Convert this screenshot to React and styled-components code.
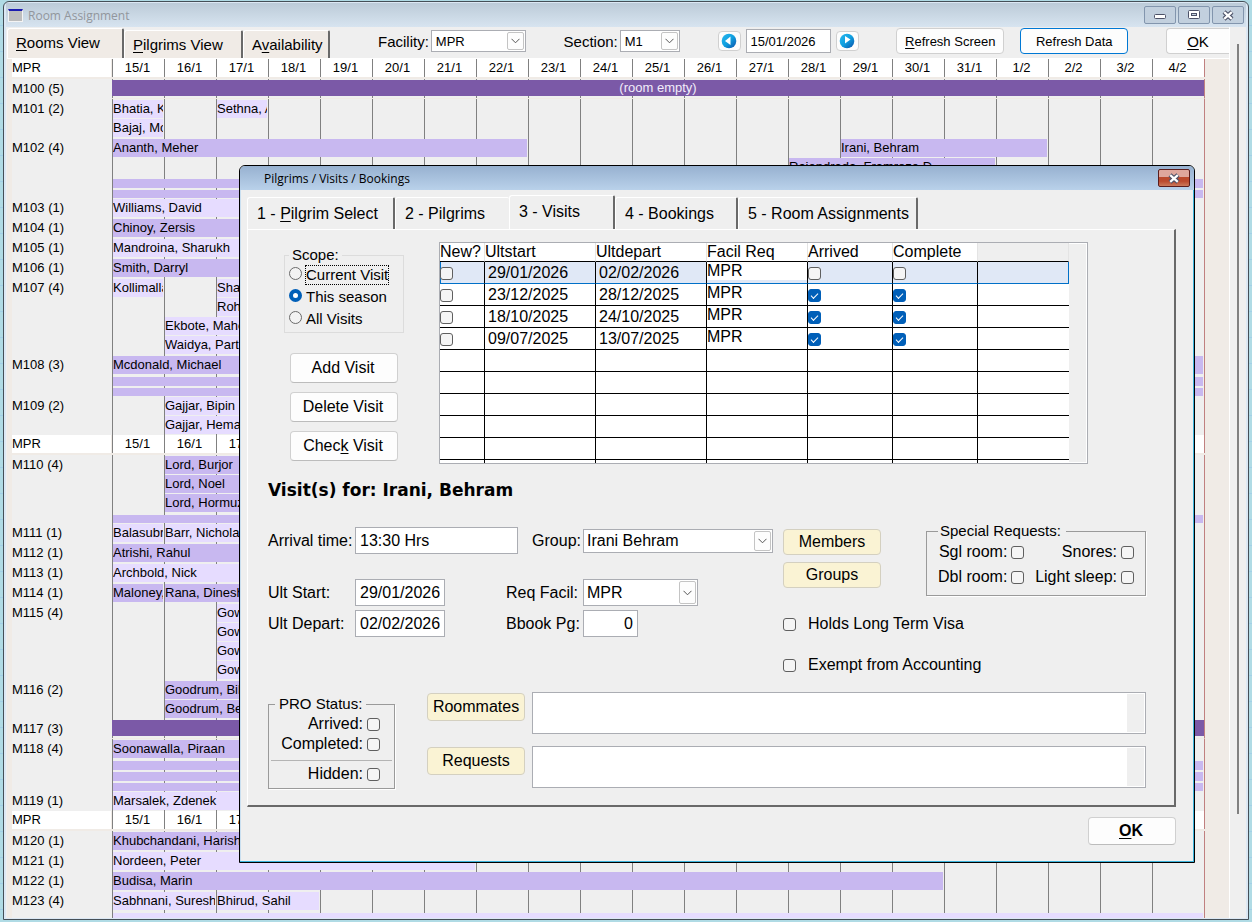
import React, { useState } from "react";
import styled, { createGlobalStyle, css } from "styled-components";

const DAYS = [
    "15/1", "16/1", "17/1", "18/1", "19/1", "20/1", "21/1", "22/1", "23/1", "24/1", "25/1",
    "26/1", "27/1", "28/1", "29/1", "30/1", "31/1", "1/2", "2/2", "3/2", "4/2",
];

// lanes: [first day, number of days, guest name], thin: number of free beds
const ROOMS = [
    { header: true },
    { name: "M100 (5)", empty: true },
    { name: "M101 (2)", lanes: [[[1, 1, "Bhatia, Karl"], [3, 1, "Sethna, Arni"]], [[1, 1, "Bajaj, Mohan"]]] },
    { name: "M102 (4)", dark: true, lanes: [[[1, 8, "Ananth, Meher"], [15, 4, "Irani, Behram"]], [[14, 4, "Rajendrada, Framroze D"]]], thin: 2 },
    { name: "M103 (1)", lanes: [[[1, 8, "Williams, David"]]] },
    { name: "M104 (1)", dark: true, lanes: [[[1, 8, "Chinoy, Zersis"]]] },
    { name: "M105 (1)", lanes: [[[1, 8, "Mandroina, Sharukh"]]] },
    { name: "M106 (1)", dark: true, lanes: [[[1, 8, "Smith, Darryl"]]] },
    { name: "M107 (4)", lanes: [[[1, 1, "Kollimalla"], [3, 6, "Sharma"]], [[3, 6, "Rohan"]], [[2, 6, "Ekbote, Mahesh"]], [[2, 6, "Waidya, Partha"]]] },
    { name: "M108 (3)", dark: true, lanes: [[[1, 21, "Mcdonald, Michael"]]], thin: 2 },
    { name: "M109 (2)", lanes: [[[2, 6, "Gajjar, Bipin"]], [[2, 6, "Gajjar, Hema"]]] },
    { header: true },
    { name: "M110 (4)", dark: true, lanes: [[[2, 6, "Lord, Burjor"]], [[2, 6, "Lord, Noel"]], [[2, 6, "Lord, Hormuz"]]], thin: 1 },
    { name: "M111 (1)", lanes: [[[1, 1, "Balasubram"], [2, 6, "Barr, Nicholas"]]] },
    { name: "M112 (1)", dark: true, lanes: [[[1, 8, "Atrishi, Rahul"]]] },
    { name: "M113 (1)", lanes: [[[1, 8, "Archbold, Nick"]]] },
    { name: "M114 (1)", dark: true, lanes: [[[1, 1, "Maloney, T"], [2, 6, "Rana, Dinesh"]]] },
    { name: "M115 (4)", lanes: [[[3, 6, "Gowda"]], [[3, 6, "Gowda"]], [[3, 6, "Gowda"]], [[3, 6, "Gowda"]]] },
    { name: "M116 (2)", dark: true, lanes: [[[2, 6, "Goodrum, Bill"]], [[2, 6, "Goodrum, Beth"]]] },
    { name: "M117 (3)", empty: true },
    { name: "M118 (4)", dark: true, lanes: [[[1, 8, "Soonawalla, Piraan"]]], thin: 3 },
    { name: "M119 (1)", lanes: [[[1, 8, "Marsalek, Zdenek"]]] },
    { header: true },
    { name: "M120 (1)", dark: true, lanes: [[[1, 7, "Khubchandani, Harish"]]] },
    { name: "M121 (1)", lanes: [[[1, 7, "Nordeen, Peter"]]] },
    { name: "M122 (1)", dark: true, lanes: [[[1, 16, "Budisa, Marin"]]] },
    { name: "M123 (4)", lanes: [[[1, 2, "Sabhnani, Suresh"], [3, 2, "Bhirud, Sahil"]]], thin: 1 },
];

const VISITS = [
    { start: "29/01/2026", depart: "02/02/2026", done: false },
    { start: "23/12/2025", depart: "28/12/2025", done: true },
    { start: "18/10/2025", depart: "24/10/2025", done: true },
    { start: "09/07/2025", depart: "13/07/2025", done: true },
];

const SelectBox = ({ id, options, small }) => (
    <SelectWrap>
        <Select id={id} $small={small}>
            {options.map((o) => (
                <option key={o}>{o}</option>
            ))}
        </Select>
        <SelectArrow>
            <svg width="9" height="6" viewBox="0 0 9 6" fill="none" stroke="#555">
                <path d="M0.5 0.8 L4.5 4.8 L8.5 0.8" />
            </svg>
        </SelectArrow>
    </SelectWrap>
);

const Globe = ({ next }) => (
    <svg width="16" height="16" viewBox="0 0 16 16">
        <defs>
            <linearGradient id={next ? "globeNext" : "globePrev"} x1="0" y1="0" x2="1" y2="1">
                <stop offset="0" stopColor="#27b7ee" />
                <stop offset="0.5" stopColor="#10a0e0" />
                <stop offset="1" stopColor="#0a4fa8" />
            </linearGradient>
        </defs>
        <circle cx="8" cy="8" r="7.3" fill={next ? "url(#globeNext)" : "url(#globePrev)"} />
        {next ? <path d="M6 3 L11.5 6.5 L6 10.5 Z" fill="#fff" /> : <path d="M9.5 3.5 L9.5 12 L4 8 Z" fill="#fff" />}
    </svg>
);

const CrossIcon = () => (
    <svg width="14" height="11" viewBox="0 0 14 11">
        <path d="M3 2 L11 9 M11 2 L3 9" stroke="#4d5268" strokeWidth="4.4" />
        <path d="M3.2 2.2 L10.8 8.8 M10.8 2.2 L3.2 8.8" stroke="#fff" strokeWidth="2.2" />
    </svg>
);

const ScheduleRow = ({ room }) => {
    if (room.header) {
        return (
            <HeaderRow>
                <HeaderLabel>MPR</HeaderLabel>
                <HeaderDays>
                    {DAYS.map((d) => (
                        <Day key={d}>{d}</Day>
                    ))}
                </HeaderDays>
            </HeaderRow>
        );
    }
    return (
        <Row>
            <RoomLabel>{room.name}</RoomLabel>
            <RoomBody $empty={room.empty}>
                {room.empty && <EmptyBar>(room empty)</EmptyBar>}
                {(room.lanes || []).map((lane, i) => (
                    <Lane key={i}>
                        {lane.map(([start, span, guest]) => (
                            <Booking key={guest} $start={start} $span={span} $dark={room.dark}>
                                {guest}
                            </Booking>
                        ))}
                    </Lane>
                ))}
                {Array.from({ length: room.thin || 0 }, (_, i) => (
                    <ThinLane key={i}>
                        <ThinBar $dark={room.dark} />
                    </ThinLane>
                ))}
            </RoomBody>
        </Row>
    );
};

const VisitsTable = () => (
    <TableFrame>
        <Table>
            <colgroup>
                <Col $width={45} />
                <Col $width={111} />
                <Col $width={111} />
                <Col $width={101} />
                <Col $width={85} />
                <Col $width={85} />
                <col />
            </colgroup>
            <thead>
                <tr>
                    <Th>New?</Th>
                    <Th>Ultstart</Th>
                    <Th>Ultdepart</Th>
                    <Th>Facil Req</Th>
                    <Th>Arrived</Th>
                    <Th>Complete</Th>
                    <Th $blank />
                </tr>
            </thead>
            <tbody>
                {VISITS.map((v, i) => (
                    <VisitRow key={v.start} $selected={i === 0}>
                        <Td $check><Check type="checkbox" aria-label="New" /></Td>
                        <Td $date>{v.start}</Td>
                        <Td $date>{v.depart}</Td>
                        <Td $facility>MPR</Td>
                        <Td $check><Check type="checkbox" aria-label="Arrived" defaultChecked={v.done} /></Td>
                        <Td $check><Check type="checkbox" aria-label="Complete" defaultChecked={v.done} /></Td>
                        <Td />
                    </VisitRow>
                ))}
                {[0, 1, 2, 3, 4, 5].map((i) => (
                    <VisitRow key={i}>
                        <Td /><Td /><Td /><Td /><Td /><Td /><Td />
                    </VisitRow>
                ))}
            </tbody>
        </Table>
        <ScrollStrip />
    </TableFrame>
);

const VisitDialog = () => {
    const [scope, setScope] = useState("season");

    return (
        <Dialog role="dialog" aria-label="Pilgrims / Visits / Bookings">
            <DialogTitle>
                <span>Pilgrims / Visits / Bookings</span>
                <CloseButton aria-label="Close"><CrossIcon /></CloseButton>
            </DialogTitle>
            <DialogBody>
                <DialogTabs>
                    <DialogTab $width={148}>1 - <u>P</u>ilgrim Select</DialogTab>
                    <DialogTab $width={114} $noEdge>2 - Pilgrims</DialogTab>
                    <DialogTab $width={106} $active>3 - Visits</DialogTab>
                    <DialogTab $width={123}>4 - Bookings</DialogTab>
                    <DialogTab $width={180}>5 - Room Assignments</DialogTab>
                </DialogTabs>
                <Panel>
                    <VisitArea>
                        <Side>
                            <ScopeBox>
                                <legend>Scope:</legend>
                                <RadioLabel $focus>
                                    <Radio type="radio" name="scope" checked={scope === "current"} onChange={() => setScope("current")} />
                                    <span>Current Visit</span>
                                </RadioLabel>
                                <RadioLabel>
                                    <Radio type="radio" name="scope" checked={scope === "season"} onChange={() => setScope("season")} />
                                    <span>This season</span>
                                </RadioLabel>
                                <RadioLabel>
                                    <Radio type="radio" name="scope" checked={scope === "all"} onChange={() => setScope("all")} />
                                    <span>All Visits</span>
                                </RadioLabel>
                            </ScopeBox>
                            <SideButtons>
                                <SideButton>Add Visit</SideButton>
                                <SideButton>Delete Visit</SideButton>
                                <SideButton>Chec<u>k</u> Visit</SideButton>
                            </SideButtons>
                        </Side>
                        <VisitsTable />
                    </VisitArea>
                    <VisitHeading>Visit(s) for: Irani, Behram</VisitHeading>
                    <FormArea>
                        <Fields>
                            <FieldRow $spaced>
                                <label htmlFor="arrival">Arrival time:</label>
                                <TextInput id="arrival" $width={163} defaultValue="13:30 Hrs" />
                                <EndLabel htmlFor="group">Group:</EndLabel>
                                <FieldSelect $width={190}><SelectBox id="group" options={["Irani Behram"]} /></FieldSelect>
                            </FieldRow>
                            <FieldRow>
                                <label htmlFor="start">Ult Start:</label>
                                <TextInput id="start" $width={90} defaultValue="29/01/2026" />
                                <label htmlFor="facil">Req Facil:</label>
                                <FieldSelect $width={115} $tall><SelectBox id="facil" options={["MPR"]} /></FieldSelect>
                            </FieldRow>
                            <FieldRow>
                                <label htmlFor="depart">Ult Depart:</label>
                                <TextInput id="depart" $width={90} defaultValue="02/02/2026" />
                                <label htmlFor="page">Bbook Pg:</label>
                                <TextInput id="page" $width={55} $right defaultValue="0" />
                            </FieldRow>
                        </Fields>
                        <Extras>
                            <ExtrasTop>
                                <CreamColumn>
                                    <CreamButton>Members</CreamButton>
                                    <CreamButton>Groups</CreamButton>
                                </CreamColumn>
                                <RequestBox>
                                    <legend>Special Requests:</legend>
                                    <CheckLabel>Sgl room:<Check type="checkbox" /></CheckLabel>
                                    <CheckLabel>Snores:<Check type="checkbox" /></CheckLabel>
                                    <CheckLabel>Dbl room:<Check type="checkbox" /></CheckLabel>
                                    <CheckLabel>Light sleep:<Check type="checkbox" /></CheckLabel>
                                </RequestBox>
                            </ExtrasTop>
                            <FlagLabel><Check type="checkbox" />Holds Long Term Visa</FlagLabel>
                            <FlagLabel><Check type="checkbox" />Exempt from Accounting</FlagLabel>
                        </Extras>
                    </FormArea>
                    <NotesArea>
                        <StatusBox>
                            <legend>PRO Status:</legend>
                            <CheckLabel>Arrived:<Check type="checkbox" /></CheckLabel>
                            <CheckLabel>Completed:<Check type="checkbox" /></CheckLabel>
                            <StatusRule />
                            <CheckLabel>Hidden:<Check type="checkbox" /></CheckLabel>
                        </StatusBox>
                        <Notes>
                            <NoteRow>
                                <CreamButton $tall>Roommates</CreamButton>
                                <NoteFrame><NoteText aria-label="Roommates" /><ScrollStrip /></NoteFrame>
                            </NoteRow>
                            <NoteRow>
                                <CreamButton $tall>Requests</CreamButton>
                                <NoteFrame><NoteText aria-label="Requests" /><ScrollStrip /></NoteFrame>
                            </NoteRow>
                        </Notes>
                    </NotesArea>
                </Panel>
                <DialogOk><u>O</u>K</DialogOk>
            </DialogBody>
        </Dialog>
    );
};

const App = () => (
    <Desktop>
        <GlobalStyle />
        <Window>
            <TitleBar>
                <WindowIcon />
                <WindowTitle>Room Assignment</WindowTitle>
                <CaptionButton aria-label="Minimize">
                    <svg width="12" height="10" viewBox="0 0 12 10">
                        <rect x="0.5" y="4.5" width="11" height="4" rx="1" fill="#fff" stroke="#4d5268" />
                    </svg>
                </CaptionButton>
                <CaptionButton aria-label="Maximize">
                    <svg width="12" height="10" viewBox="0 0 12 10">
                        <rect x="0.5" y="0.5" width="11" height="8" rx="1" fill="#fff" stroke="#4d5268" />
                        <rect x="3.5" y="3.5" width="5" height="2" fill="#c5d3e0" stroke="#4d5268" />
                    </svg>
                </CaptionButton>
                <CaptionButton aria-label="Close"><CrossIcon /></CaptionButton>
            </TitleBar>
            <WindowBody>
                <Main>
                    <Toolbar>
                        <ViewTab $width={117} $active><u>R</u>ooms View</ViewTab>
                        <ViewTab $width={119}><u>P</u>ilgrims View</ViewTab>
                        <ViewTab $width={87}>A<u>v</u>ailability</ViewTab>
                        <Tools>
                            <ToolGroup $gap={2}>
                                <label htmlFor="facility">Facility:</label>
                                <ToolSelect $width={95}><SelectBox small id="facility" options={["MPR"]} /></ToolSelect>
                            </ToolGroup>
                            <ToolGroup $gap={2}>
                                <label htmlFor="section">Section:</label>
                                <ToolSelect $width={60}><SelectBox small id="section" options={["M1"]} /></ToolSelect>
                            </ToolGroup>
                            <ToolGroup $gap={5}>
                                <GlobeButton aria-label="Previous"><Globe /></GlobeButton>
                                <DateInput aria-label="Start date" defaultValue="15/01/2026" />
                                <GlobeButton aria-label="Next"><Globe next /></GlobeButton>
                            </ToolGroup>
                            <ToolGroup $gap={16}>
                                <ToolButton><u>R</u>efresh Screen</ToolButton>
                                <ToolButton $focus>Refresh Data</ToolButton>
                            </ToolGroup>
                            <OkButton><u>O</u>K</OkButton>
                        </Tools>
                    </Toolbar>
                    <Schedule>
                        {ROOMS.map((room, i) => (
                            <ScheduleRow key={i} room={room} />
                        ))}
                    </Schedule>
                </Main>
                <ScrollColumn><ScrollThumb /></ScrollColumn>
            </WindowBody>
        </Window>
        <VisitDialog />
    </Desktop>
);

const GlobalStyle = createGlobalStyle`
* {
    box-sizing: border-box;
}

body {
    margin: 0;
    font-family: "Liberation Sans", Arial, sans-serif;
    color: #000;
}

button, input, select, textarea {
    font-family: inherit;
    color: inherit;
    margin: 0;
}

u {
    text-underline-offset: 2px;
}
`;

const Desktop = styled.div`
position: relative;
height: 100vh;
min-height: 866px;
overflow: hidden;
padding: 1px 3px 2px 3px;
background: repeating-linear-gradient(#b0dbe5 0 25px, #a2cfe8 25px 26px);
`;

const Window = styled.div`
display: flex;
flex-direction: column;
height: 100%;
padding: 1px 2px;
border: 1px solid #454f57;
border-radius: 6px 6px 0 0;
background: #dce8f4;
overflow: hidden;
`;

const TitleBar = styled.header`
display: flex;
align-items: center;
flex: none;
height: 24px;
gap: 2px;
padding: 0 2px 0 2px;
background: linear-gradient(#bccbd8, #d7e4f0);
`;

const WindowIcon = styled.span`
width: 15px;
height: 13px;
border: 1px solid #f4f4f4;
border-top: 2px solid #1c1cb0;
background: #bdbdbd;
`;

const WindowTitle = styled.span`
flex: 1;
padding-left: 3px;
font: 12px "Open Sans", "Noto Sans", sans-serif;
color: #92969c;
`;

const CaptionButton = styled.button`
display: flex;
align-items: center;
justify-content: center;
width: 32px;
height: 18px;
padding: 0;
border: 1px solid #8295ad;
border-radius: 2px;
background: #c2d0de;
`;

const CloseButton = styled(CaptionButton)`
border-color: #5b1d1d;
background: linear-gradient(#dfa79d 0 45%, #bb4a2e 45% 70%, #cc7a5c);
`;

const WindowBody = styled.div`
display: flex;
flex: 1;
min-height: 0;
padding: 0 0 0 1px;
background: #efefef;
`;

const Main = styled.main`
display: flex;
flex-direction: column;
flex: 1;
min-width: 0;
border-right: 1px solid #fff;
overflow: hidden;
`;

const ScrollColumn = styled.div`
width: 16px;
padding: 17px 0 104px 7px;
`;

const ScrollThumb = styled.div`
width: 2px;
height: 100%;
background: #808080;
`;

const Toolbar = styled.div`
display: flex;
align-items: flex-end;
flex: none;
height: 31px;
font-size: 15px;
`;

const tabBase = css`
padding: 0 0 0 9px;
border: 0;
border-top: 1px solid #fff;
border-left: 1px solid #fff;
border-right: 2px solid #696969;
border-radius: 3px 2px 0 0;
font-size: 16px;
text-align: left;
white-space: nowrap;
`;

const ViewTab = styled.button`
${tabBase}
flex: none;
width: ${({ $width }) => $width}px;
height: ${({ $active }) => ($active ? 30 : 28)}px;
padding-left: 8px;
padding-bottom: ${({ $active }) => ($active ? 2 : 0)}px;
background: #f0ebe6;
font-size: 15px;
`;

const Tools = styled.div`
display: flex;
align-items: center;
justify-content: space-between;
align-self: stretch;
flex: 1;
padding: 0 0 3px 48px;
`;

const ToolGroup = styled.div`
display: flex;
align-items: center;
gap: ${({ $gap }) => $gap}px;
`;

const ToolSelect = styled.div`
width: ${({ $width }) => $width}px;
height: 22px;
`;

const GlobeButton = styled.button`
display: flex;
align-items: center;
justify-content: center;
width: 23px;
height: 20px;
padding: 0;
border: 1px solid #d0d0d0;
border-radius: 4px;
background: #fdfdfd;
`;

const DateInput = styled.input`
width: 85px;
height: 24px;
padding: 0 4px;
border: 1px solid #abadb3;
background: #fff;
font-size: 13px;
`;

const ToolButton = styled.button`
width: 108px;
height: 26px;
padding: 0;
border: 1px solid ${({ $focus }) => ($focus ? "#0078d4" : "#d0d0d0")};
border-radius: 4px;
background: #fdfdfd;
font-size: 13px;
white-space: nowrap;
`;

const OkButton = styled.button`
width: 63px;
height: 26px;
border: 1px solid #d0d0d0;
border-right: 0;
border-radius: 4px 0 0 4px;
background: #fdfdfd;
font-size: 15px;
`;

const Schedule = styled.div`
flex: 1;
min-height: 0;
padding: 0 24px 0 5px;
border-top: 1px solid #fff;
background: #f0ebe6;
overflow: hidden;
font-size: 13px;
line-height: 18px;
`;

const Row = styled.div`
display: grid;
grid-template-columns: 100px minmax(0, 1fr);
background: #efefef;
`;

const HeaderRow = styled(Row)`
height: 20px;
padding-bottom: 2px;
background: #f0ebe6;
`;

const HeaderLabel = styled.div`
margin-right: 1px;
background: #fff;
`;

const HeaderDays = styled.div`
display: grid;
grid-template-columns: repeat(21, minmax(0, 1fr));
border-right: 1px solid #c08080;
background: #fff;
`;

const Day = styled.div`
padding-right: 2px;
border-left: 1px solid #808080;
text-align: center;
`;

const RoomLabel = styled.div`
padding-top: 1px;
`;

const RoomBody = styled.div`
min-height: 20px;
padding-top: 1px;
border-right: 1px solid #c08080;
background-image: linear-gradient(to right, #808080 1px, transparent 1px);
background-size: calc(100% / 21) 100%;
${({ $empty }) => $empty && "border-bottom: 1px solid #f0ebe6;"}
`;

const EmptyBar = styled.div`
height: 16px;
line-height: 16px;
background: #7b59a7;
color: #f2ecfa;
text-align: center;
`;

const Lane = styled.div`
display: grid;
grid-template-columns: repeat(21, minmax(0, 1fr));
height: 19px;
padding-bottom: 1px;
`;

const Booking = styled.div`
grid-column: ${({ $start, $span }) => `${$start} / span ${$span}`};
grid-row: 1;
margin: 0 1px;
background: ${({ $dark }) => ($dark ? "#c8b8f0" : "#e6dcff")};
overflow: hidden;
white-space: nowrap;
`;

const ThinLane = styled.div`
height: 11px;
padding: 2px 1px 0;

&:last-child {
    height: 10px;
}
`;

const ThinBar = styled.div`
height: 100%;
background: ${({ $dark }) => ($dark ? "#c8b8f0" : "#e6dcff")};
`;

const SelectWrap = styled.div`
position: relative;
width: 100%;
height: 100%;
`;

const Select = styled.select`
width: 100%;
height: 100%;
padding: 0 24px 0 ${({ $small }) => ($small ? 4 : 3)}px;
border: 1px solid #abadb3;
border-radius: 0;
background: #fff;
appearance: none;
font-size: ${({ $small }) => ($small ? 13 : 16)}px;
`;

const SelectArrow = styled.span`
position: absolute;
top: 2px;
right: 2px;
bottom: 2px;
display: flex;
align-items: center;
justify-content: center;
width: 17px;
border: 1px solid #c4c4c4;
border-radius: 2px;
background: #fdfdfd;
pointer-events: none;
`;

const Dialog = styled.section`
position: absolute;
top: 165px;
left: 239px;
right: 57px;
border: 1px solid #000;
border-radius: 6px 6px 0 0;
background: #efefef;
box-shadow: inset -1px -1px 0 #3cb4dc, inset 1px 0 0 #c9dff0;
font-size: 15px;
line-height: 18px;
`;

const DialogTitle = styled.header`
display: flex;
align-items: center;
justify-content: space-between;
height: 24px;
padding: 0 4px 0 24px;
border-radius: 5px 5px 0 0;
background: linear-gradient(#97b1d0, #b9d1ea);
font: 12px "Open Sans", "Noto Sans", sans-serif;
`;

const DialogBody = styled.div`
display: flex;
flex-direction: column;
margin: 0 1px 1px 0;
padding: 5px 17px 16px 7px;
`;

const DialogTabs = styled.div`
display: flex;
align-items: flex-end;
height: 34px;
`;

const DialogTab = styled.button`
${tabBase}
width: ${({ $width }) => $width}px;
height: ${({ $active }) => ($active ? 35 : 32)}px;
margin-bottom: ${({ $active }) => ($active ? -1 : 0)}px;
padding-bottom: ${({ $active }) => ($active ? 3 : 0)}px;
background: #efefef;
${({ $noEdge }) => $noEdge && "border-right: 0;"}
`;

const Panel = styled.div`
padding: 12px 28px 16px 0;
border: 1px solid #fff;
border-right: 2px solid #696969;
border-bottom: 2px solid #696969;
`;

const VisitArea = styled.div`
display: flex;
gap: 35px;
padding: 0 58px 0 36px;
`;

const Side = styled.div`
flex: none;
width: 120px;
padding-top: 4px;
`;

const ScopeBox = styled.fieldset`
height: 87px;
margin: 0;
padding: 0 4px;
border: 1px solid #dcdcdc;

legend {
    padding: 0 3px;
}
`;

const RadioLabel = styled.label`
display: flex;
align-items: center;
gap: 4px;
height: 22px;

span {
    outline: ${({ $focus }) => ($focus ? "1px dotted #000" : "none")};
    white-space: nowrap;
}
`;

const Radio = styled.input`
flex: none;
width: 13px;
height: 13px;
border: 1px solid #6a6a6a;
border-radius: 50%;
background: #f3f3f3;
appearance: none;

&& {
    margin-bottom: 3px;
}

&:checked {
    border: 4px solid #005fb8;
    background: #fff;
}
`;

const SideButtons = styled.div`
display: flex;
flex-direction: column;
gap: 9px;
padding: 20px 6px 0;
`;

const SideButton = styled.button`
height: 30px;
padding: 0 2px 0 0;
border: 1px solid #d0d0d0;
border-bottom-color: #bcbcbc;
border-radius: 4px;
background: #fdfdfd;
font-size: 16px;
`;

const TableFrame = styled.div`
display: flex;
flex: 1;
height: 222px;
border: 1px solid #abadb3;
background: #fff;
overflow: hidden;
`;

const Table = styled.table`
flex: 1;
width: 100%;
height: max-content;
border-collapse: separate;
border-spacing: 0;
table-layout: fixed;
font-size: 16px;
`;

const Col = styled.col`
width: ${({ $width }) => $width}px;
`;

const Th = styled.th`
height: 19px;
padding: 0;
border-right: 1px solid #e4e4e4;
border-bottom: 1px solid #000;
background: ${({ $blank }) => ($blank ? "#efefef" : "#fff")};
font-weight: normal;
line-height: 18px;
text-align: left;
`;

const Td = styled.td`
height: 22px;
padding: 0 0 ${({ $check }) => ($check ? 1 : 0)}px ${({ $date }) => ($date ? 3 : 0)}px;
border-right: 1px solid #000;
border-bottom: 1px solid #000;
line-height: ${({ $facility, $check }) => ($facility ? 18 : $check ? 19 : 20)}px;
vertical-align: ${({ $facility }) => ($facility ? "top" : "middle")};

&:last-child {
    border-right: 0;
}
`;

const VisitRow = styled.tr`
${({ $selected }) =>
    $selected &&
    css`
background: #e0e8f6;

td {
    border-bottom-color: #0070c8;
}

td:first-child {
    box-shadow: inset 1px 0 0 #0070c8;
}

td:nth-child(4) {
    background: linear-gradient(#fff 18px, #e0e8f6 18px);
}

td:last-child {
    border-right: 1px solid #0070c8;
}
`}
`;

const Check = styled.input`
display: inline-grid;
place-content: center;
flex: none;
width: 13px;
height: 13px;
border: 1px solid #5f5f5f;
border-radius: 3px;
background: #f5f5f5;
appearance: none;
vertical-align: middle;

&:checked {
    border-color: #005fb8;
    background: #005fb8;
}

&:checked::after {
    content: "";
    width: 6px;
    height: 3px;
    border-left: 1px solid #fff;
    border-bottom: 1px solid #fff;
    transform: rotate(-45deg);
}
`;

const ScrollStrip = styled.div`
flex: none;
width: 17px;
margin: 1px 1px 1px 0;
background: #efefef;
`;

const VisitHeading = styled.h2`
margin: 16px 0 22px 20px;
font: bold 17px/20px Verdana, "DejaVu Sans", sans-serif;
`;

const FormArea = styled.div`
display: flex;
gap: 10px;
padding-left: 20px;
`;

const Fields = styled.div`
flex: none;
padding-top: 5px;
`;

const FieldRow = styled.div`
display: grid;
grid-template-columns: 87px 151px 77px 190px;
align-items: center;
height: 27px;
margin-bottom: ${({ $spaced }) => ($spaced ? 25 : 4)}px;
font-size: 16px;
white-space: nowrap;
`;

const EndLabel = styled.label`
justify-self: end;
padding-right: 2px;
`;

const TextInput = styled.input`
width: ${({ $width }) => $width}px;
height: 27px;
padding: 0 4px;
border: 1px solid #abadb3;
background: #fff;
font-size: 16px;
text-align: ${({ $right }) => ($right ? "right" : "left")};
`;

const FieldSelect = styled.div`
width: ${({ $width }) => $width}px;
height: ${({ $tall }) => ($tall ? 27 : 24)}px;
`;

const Extras = styled.div`
flex: 1;
`;

const ExtrasTop = styled.div`
display: flex;
justify-content: space-between;
margin-bottom: 18px;
`;

const CreamColumn = styled.div`
display: flex;
flex-direction: column;
gap: 7px;
padding-top: 7px;
`;

const CreamButton = styled.button`
flex: none;
width: 98px;
height: ${({ $tall }) => ($tall ? 28 : 26)}px;
padding: 0;
border: 1px solid #d4d0c0;
border-radius: 4px;
background: #faf3d4;
font-size: 16px;
`;

const groupBox = css`
margin: 0;
border: 1px solid #9a9a9a;
box-shadow: 1px 1px 0 #fff;
`;

const RequestBox = styled.fieldset`
${groupBox}
display: grid;
grid-template-columns: auto auto;
justify-content: space-between;
align-content: start;
gap: 7px 0;
width: 220px;
height: 74px;
padding: 3px 11px 0;

legend {
    padding: 0 5px 0 2px;
}
`;

const CheckLabel = styled.label`
display: flex;
align-items: center;
justify-content: flex-end;
gap: 4px;
font-size: 16px;
white-space: nowrap;
`;

const FlagLabel = styled.label`
display: flex;
align-items: center;
gap: 12px;
height: 20px;
margin-bottom: 21px;
font-size: 16px;
white-space: nowrap;

&:last-child {
    margin-bottom: 0;
}
`;

const NotesArea = styled.div`
display: flex;
gap: 32px;
margin-top: 17px;
padding-left: 20px;
`;

const StatusBox = styled.fieldset`
${groupBox}
flex: none;
width: 127px;
height: 94px;
margin-top: 3px;
padding: 1px 2px 0;

legend {
    margin-left: 4px;
    padding: 0 4px;
}

label {
    height: 20px;
    padding-right: 12px;
}
`;

const StatusRule = styled.hr`
margin: 6px 0 3px;
border: 0;
border-top: 1px solid #b4b4b4;
`;

const Notes = styled.div`
display: flex;
flex-direction: column;
flex: 1;
gap: 12px;
`;

const NoteRow = styled.div`
display: flex;
align-items: flex-start;
gap: 7px;

button {
    margin-top: 1px;
}
`;

const NoteFrame = styled.div`
display: flex;
flex: 1;
height: 42px;
border: 1px solid #abadb3;
background: #fff;
`;

const NoteText = styled.textarea`
flex: 1;
min-width: 0;
padding: 2px;
border: 0;
background: transparent;
font-size: 16px;
resize: none;
`;

const DialogOk = styled(SideButton)`
align-self: flex-end;
width: 88px;
height: 28px;
margin-top: 10px;
font-weight: bold;
`;

export default App;
